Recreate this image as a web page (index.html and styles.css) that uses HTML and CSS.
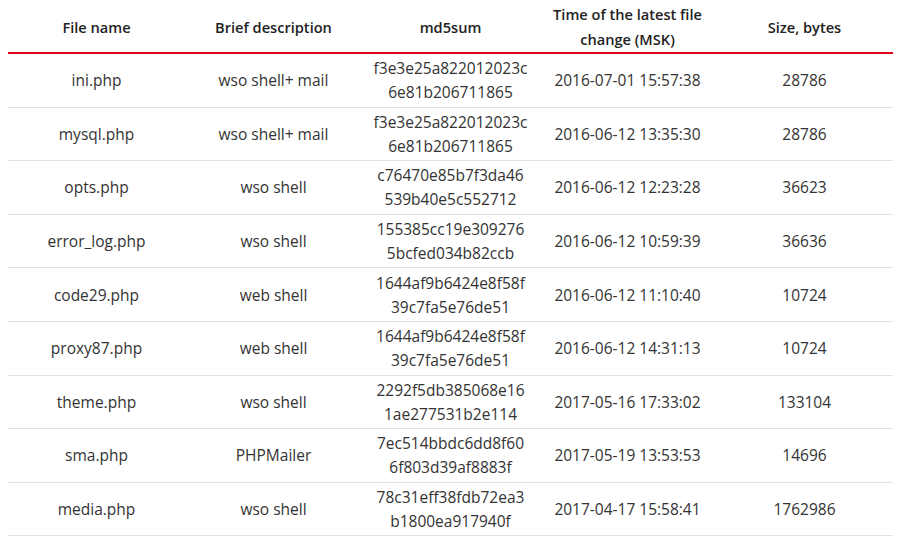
FILE: index.html
```html
<!DOCTYPE html>
<html>
<head>
<meta charset="utf-8">
<link rel="stylesheet" href="styles.css">
</head>
<body>
<table class="files">
  <thead>
    <tr>
      <th>File name</th>
      <th>Brief description</th>
      <th>md5sum</th>
      <th>Time of the latest file change (MSK)</th>
      <th>Size, bytes</th>
    </tr>
  </thead>
  <tbody>
    <tr><td>ini.php</td><td>wso shell+ mail</td><td>f3e3e25a822012023c<br>6e81b206711865</td><td>2016-07-01 15:57:38</td><td>28786</td></tr>
    <tr><td>mysql.php</td><td>wso shell+ mail</td><td>f3e3e25a822012023c<br>6e81b206711865</td><td>2016-06-12 13:35:30</td><td>28786</td></tr>
    <tr><td>opts.php</td><td>wso shell</td><td>c76470e85b7f3da46<br>539b40e5c552712</td><td>2016-06-12 12:23:28</td><td>36623</td></tr>
    <tr><td>error_log.php</td><td>wso shell</td><td>155385cc19e309276<br>5bcfed034b82ccb</td><td>2016-06-12 10:59:39</td><td>36636</td></tr>
    <tr><td>code29.php</td><td>web shell</td><td>1644af9b6424e8f58f<br>39c7fa5e76de51</td><td>2016-06-12 11:10:40</td><td>10724</td></tr>
    <tr><td>proxy87.php</td><td>web shell</td><td>1644af9b6424e8f58f<br>39c7fa5e76de51</td><td>2016-06-12 14:31:13</td><td>10724</td></tr>
    <tr><td>theme.php</td><td>wso shell</td><td>2292f5db385068e16<br>1ae277531b2e114</td><td>2017-05-16 17:33:02</td><td>133104</td></tr>
    <tr><td>sma.php</td><td>PHPMailer</td><td>7ec514bbdc6dd8f60<br>6f803d39af8883f</td><td>2017-05-19 13:53:53</td><td>14696</td></tr>
    <tr><td>media.php</td><td>wso shell</td><td>78c31eff38fdb72ea3<br>b1800ea917940f</td><td>2017-04-17 15:58:41</td><td>1762986</td></tr>
  </tbody>
</table>
</body>
</html>
```
FILE: styles.css
```css
html, body {
  margin: 0;
  padding: 0;
  background: #fff;
}
body {
  padding: 0 7px 0 8px;
  font-family: "Open Sans", "Lato", sans-serif;
  font-size: 15.5px;
  color: #333;
}
.files {
  width: 885px;
  border-collapse: collapse;
  table-layout: fixed;
}
.files th {
  font-size: 14.6px;
  font-weight: 600;
  color: #222;
  height: 48px;
  padding: 2px 2px 0;
  line-height: 25px;
  text-align: center;
  vertical-align: middle;
  border-bottom: 2px solid #e3001b;
}
.files td {
  height: 52.6px;
  padding: 0 2px;
  line-height: 24px;
  text-align: center;
  vertical-align: middle;
  border-bottom: 1px solid #dde3e6;
}
```
